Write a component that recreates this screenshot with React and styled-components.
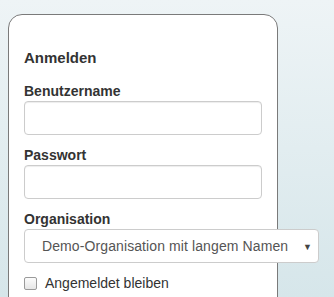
import React from 'react';
import styled, { createGlobalStyle } from 'styled-components';

const GlobalStyle = createGlobalStyle`
  html, body {
    margin: 0;
    height: 100%;
  }
  body {
    background: linear-gradient(to bottom, #eef4f6 0%, #d6e6ea 100%);
    font-family: "Liberation Sans", Arial, sans-serif;
    font-size: 14px;
    color: #333;
    overflow: hidden;
  }
`;

const Page = styled.div`
  padding: 14px 8px 0;
`;

const Card = styled.form`
  width: 270px;
  box-sizing: border-box;
  background: #fff;
  border: 1px solid #7a7a7a;
  border-radius: 14px;
  padding: 34px 15px 20px;
  min-height: 320px;
`;

const Heading = styled.h3`
  margin: 0 0 15px;
  font-size: 15px;
  font-weight: bold;
  line-height: 18px;
  color: #333;
`;

const Group = styled.div`
  margin-bottom: ${(p) => p.$gap || 11}px;
`;

const Label = styled.label`
  display: block;
  font-weight: bold;
  line-height: 18px;
  margin-bottom: 1px;
  color: #333;
`;

const Input = styled.input`
  display: block;
  box-sizing: border-box;
  width: 238px;
  height: 34px;
  margin: 0;
  padding: 6px 12px;
  border: 1px solid #ccc;
  border-radius: 4px;
  background: #fff;
  box-shadow: inset 0 1px 1px rgba(0, 0, 0, 0.075);
  font: inherit;
`;

const SelectBox = styled.div`
  box-sizing: border-box;
  width: 295px;
  height: 34px;
  display: flex;
  align-items: center;
  padding: 0 6px 0 17px;
  border: 1px solid #ccc;
  border-radius: 4px;
  background: #fff;
  color: #555;
  white-space: nowrap;
  letter-spacing: 0.1px;
`;

const Arrow = styled.span`
  margin-left: auto;
  font-size: 9px;
  color: #444;
  padding-top: 1px;
  letter-spacing: 0;
`;

const CheckRow = styled.label`
  display: flex;
  align-items: center;
  gap: 8px;
  line-height: 16px;
  color: #333;
`;

const Box = styled.span`
  width: 11px;
  height: 11px;
  border: 1px solid #9a9a9a;
  border-radius: 2px;
  background: linear-gradient(#fcfcfc, #e6e6e6);
`;

export default function App() {
  return (
    <Page>
      <GlobalStyle />
      <Card>
        <Heading>Anmelden</Heading>
        <Group>
          <Label>Benutzername</Label>
          <Input type="text" />
        </Group>
        <Group>
          <Label>Passwort</Label>
          <Input type="password" />
        </Group>
        <Group $gap={12}>
          <Label>Organisation</Label>
          <SelectBox>
            Demo-Organisation mit langem Namen
            <Arrow>▼</Arrow>
          </SelectBox>
        </Group>
        <CheckRow>
          <Box />
          Angemeldet bleiben
        </CheckRow>
      </Card>
    </Page>
  );
}
